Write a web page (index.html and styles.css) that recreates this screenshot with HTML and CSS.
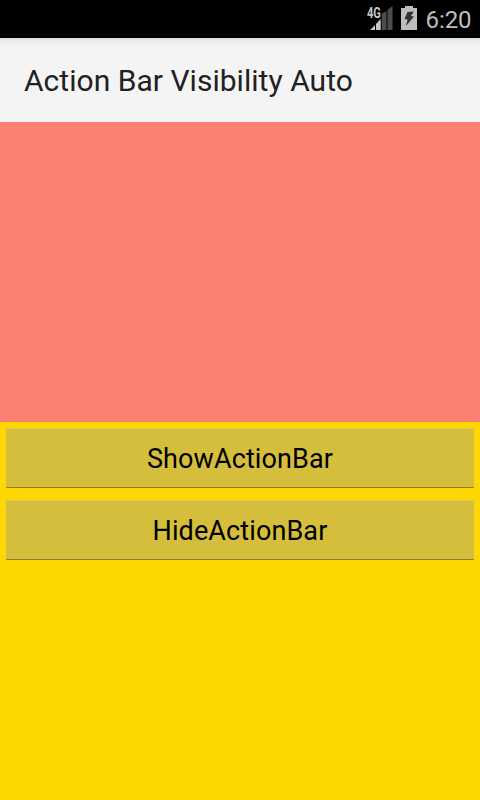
FILE: index.html
```html
<!DOCTYPE html>
<html lang="en">
<head>
<meta charset="utf-8">
<title>Action Bar Visibility Auto</title>
<link rel="stylesheet" href="styles.css">
</head>
<body>
<div class="status-bar">
<div class="network">
<svg class="signal" width="27" height="26" viewBox="0 0 27 26"><path fill="#c8c8c8" d="M4 25L9 20V25zM10 19L14.700 14V25h-4.700z"/><path fill="#4b4b4b" d="M15.700 8.500L20.500 6.300V25h-4.800zM15.700 11L20.500 6.300V25h-4.800zM21.500 5L26.500 1V25h-5z"/></svg>
<span class="net-type">4G</span>
</div>
<svg class="battery" width="16" height="24" viewBox="0 0 16 24"><path fill="#bebebe" d="M4 0h8v2h4v22H0V2h4z"/><path fill="#333" d="M6.500 6L13 5.500L9.800 10L13 10.500L5 20L6.500 13.500L3.500 13z"/></svg>
<span class="clock">6:20</span>
</div>
<header class="action-bar"><h1 class="title">Action Bar Visibility Auto</h1></header>
<div class="hero"></div>
<main class="buttons">
<button class="btn">ShowActionBar</button>
<button class="btn">HideActionBar</button>
</main>
</body>
</html>
```
FILE: styles.css
```css
body { margin: 0; height: 800px; display: flex; flex-direction: column; background: #ffd700; font-family: Roboto, sans-serif; overflow: hidden; }
.status-bar { height: 38px; background: #000; display: flex; align-items: center; justify-content: flex-end; }
.network { position: relative; height: 26px; margin-right: 8px; top: -1px; }
.signal { display: block; }
.net-type { position: absolute; left: 1px; top: 1px; font-size: 15px; line-height: 14px; font-weight: 700; color: #c8c8c8; transform: scaleX(0.74); transform-origin: left; }
.battery { margin-right: 9px; position: relative; top: -1px; }
.clock { color: #bebebe; font-size: 24px; line-height: 38px; letter-spacing: -0.1px; margin-right: 8.500px; padding-top: 1px; }
.action-bar { height: 84px; background: linear-gradient(#dcdcdc, #ededed 3px, #f4f4f4 9px, #f4f4f4); display: flex; align-items: center; padding-left: 24px; }
.title { margin: 0; font-size: 30px; font-weight: 400; letter-spacing: 0.03px; color: #212121; }
.hero { height: 300px; background: #fa8072; }
.buttons { display: flex; flex-direction: column; gap: 12px; padding: 6px; }
.btn { height: 60px; padding: 2px 0 0; border: 0; border-radius: 1px; background: #d5be3b; box-shadow: inset 0 1px #dccb68, inset 0 -1px #8c7b20; font: 27px Roboto, sans-serif; letter-spacing: 0.1px; color: #000; }
```
